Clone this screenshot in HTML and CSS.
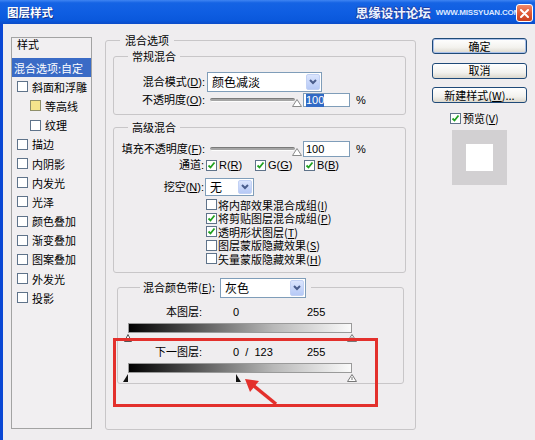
FILE: index.html
```html
<!DOCTYPE html>
<html lang="zh-CN">
<head>
  <meta charset="UTF-8">
  <title>图层样式</title>
  <link rel="stylesheet" href="styles.css">
</head>
<body>
<div class="window">

  <div class="titlebar">
    <span class="title">图层样式</span>
    <span class="watermark">
      <span class="wm-cn">思缘设计论坛</span>
      <span class="wm-en">WWW.MISSYUAN.COM</span>
    </span>
    <span class="close">
      <svg width="9" height="9" viewBox="0 0 9 9"><path d="M1 1 L8 8 M8 1 L1 8" stroke="#fff" stroke-width="2" stroke-linecap="round"/></svg>
    </span>
  </div>

  <div class="frame">

    <!-- 左侧样式列表 -->
    <div class="style-list">
      <div class="item head">样式</div>
      <div class="item selected">混合选项:自定</div>
      <div class="item"><span class="cb"></span>斜面和浮雕</div>
      <div class="item sub"><span class="cb hot"></span>等高线</div>
      <div class="item sub"><span class="cb"></span>纹理</div>
      <div class="item"><span class="cb"></span>描边</div>
      <div class="item"><span class="cb"></span>内阴影</div>
      <div class="item"><span class="cb"></span>内发光</div>
      <div class="item"><span class="cb"></span>光泽</div>
      <div class="item"><span class="cb"></span>颜色叠加</div>
      <div class="item"><span class="cb"></span>渐变叠加</div>
      <div class="item"><span class="cb"></span>图案叠加</div>
      <div class="item"><span class="cb"></span>外发光</div>
      <div class="item"><span class="cb"></span>投影</div>
    </div>

    <!-- 混合选项 -->
    <fieldset class="group main">
      <legend>混合选项</legend>

      <fieldset class="group section general">
        <legend>常规混合</legend>
        <div class="row r-mode">
          <span class="lbl">混合模式(<u>D</u>):</span>
          <div class="combo w-mode">
            <span class="val">颜色减淡</span>
            <span class="drop"><svg width="8" height="6" viewBox="0 0 8 6"><path d="M1 1 L4 4 L7 1" fill="none" stroke="#4a5d8c" stroke-width="2"/></svg></span>
          </div>
        </div>
        <div class="row r-opacity">
          <span class="lbl">不透明度(<u>O</u>):</span>
          <div class="slider">
            <span class="track"></span>
            <svg class="thumb" width="10" height="8" viewBox="0 0 10 8"><path d="M5 0.5 L9.5 7.5 L0.5 7.5 Z" fill="#fff" stroke="#8a8a8a"/></svg>
          </div>
          <div class="num"><span class="sel">100</span></div>
          <span class="pct">%</span>
        </div>
      </fieldset>

      <fieldset class="group section advanced">
        <legend>高级混合</legend>
        <div class="row r-fill">
          <span class="lbl">填充不透明度(<u>F</u>):</span>
          <div class="slider">
            <span class="track"></span>
            <svg class="thumb" width="10" height="8" viewBox="0 0 10 8"><path d="M5 0.5 L9.5 7.5 L0.5 7.5 Z" fill="#fff" stroke="#8a8a8a"/></svg>
          </div>
          <div class="num tall">100</div>
          <span class="pct">%</span>
        </div>
        <div class="row r-channel">
          <span class="lbl">通道:</span>
          <span class="chk-inline"><span class="cb on"><svg width="9" height="9" viewBox="0 0 9 9"><path d="M1.5 4.5 L3.5 6.5 L7.5 1.5" fill="none" stroke="#21a121" stroke-width="1.8"/></svg></span>R(<u>R</u>)</span>
          <span class="chk-inline"><span class="cb on"><svg width="9" height="9" viewBox="0 0 9 9"><path d="M1.5 4.5 L3.5 6.5 L7.5 1.5" fill="none" stroke="#21a121" stroke-width="1.8"/></svg></span>G(<u>G</u>)</span>
          <span class="chk-inline"><span class="cb on"><svg width="9" height="9" viewBox="0 0 9 9"><path d="M1.5 4.5 L3.5 6.5 L7.5 1.5" fill="none" stroke="#21a121" stroke-width="1.8"/></svg></span>B(<u>B</u>)</span>
        </div>
        <div class="row r-knock">
          <span class="lbl">挖空(<u>N</u>):</span>
          <div class="combo w-knock">
            <span class="val">无</span>
            <span class="drop"><svg width="8" height="6" viewBox="0 0 8 6"><path d="M1 1 L4 4 L7 1" fill="none" stroke="#4a5d8c" stroke-width="2"/></svg></span>
          </div>
        </div>
        <div class="checklist">
          <div class="chk"><span class="cb"></span>将内部效果混合成组(<u>I</u>)</div>
          <div class="chk"><span class="cb on"><svg width="9" height="9" viewBox="0 0 9 9"><path d="M1.5 4.5 L3.5 6.5 L7.5 1.5" fill="none" stroke="#21a121" stroke-width="1.8"/></svg></span>将剪贴图层混合成组(<u>P</u>)</div>
          <div class="chk"><span class="cb on"><svg width="9" height="9" viewBox="0 0 9 9"><path d="M1.5 4.5 L3.5 6.5 L7.5 1.5" fill="none" stroke="#21a121" stroke-width="1.8"/></svg></span>透明形状图层(<u>T</u>)</div>
          <div class="chk"><span class="cb"></span>图层蒙版隐藏效果(<u>S</u>)</div>
          <div class="chk"><span class="cb"></span>矢量蒙版隐藏效果(<u>H</u>)</div>
        </div>
      </fieldset>

      <fieldset class="group blend">
        <legend>
          <div class="legend-row">
            <span>混合颜色带(<u>E</u>):</span>
            <div class="combo w-band">
              <span class="val">灰色</span>
              <span class="drop"><svg width="8" height="6" viewBox="0 0 8 6"><path d="M1 1 L4 4 L7 1" fill="none" stroke="#4a5d8c" stroke-width="2"/></svg></span>
            </div>
          </div>
        </legend>

        <div class="band-row first">
          <span class="lbl">本图层:</span>
          <span class="v-lo">0</span>
          <span>255</span>
        </div>
        <div class="bar"></div>
        <div class="thumbs">
          <svg class="t-left" width="8" height="8" viewBox="0 0 8 8"><path d="M4 0.5 L7.5 7.5 L0.5 7.5 Z" fill="#fff" stroke="#555"/></svg>
          <svg class="t-right" width="10" height="8" viewBox="0 0 10 8"><path d="M5 0.5 L9.5 7.5 L0.5 7.5 Z" fill="#fff" stroke="#777"/><path d="M5 3 V6" stroke="#777"/></svg>
        </div>

        <div class="band-row">
          <span class="lbl">下一图层:</span>
          <span class="v-lo">0 &nbsp;/ &nbsp;123</span>
          <span>255</span>
        </div>
        <div class="bar"></div>
        <div class="thumbs">
          <svg class="t-half-l" width="5" height="8" viewBox="0 0 5 8"><path d="M5 0 V8 H0 Z" fill="#111"/></svg>
          <svg class="t-half-r" style="left: 48.2%" width="5" height="8" viewBox="0 0 5 8"><path d="M0 0 V8 H5 Z" fill="#111"/></svg>
          <svg class="t-right" width="10" height="8" viewBox="0 0 10 8"><path d="M5 0.5 L9.5 7.5 L0.5 7.5 Z" fill="#fff" stroke="#777"/><path d="M5 3 V6" stroke="#777"/></svg>
        </div>
      </fieldset>
    </fieldset>

    <!-- 右侧按钮 -->
    <div class="side">
      <div class="btn default">确定</div>
      <div class="btn">取消</div>
      <div class="btn">新建样式(<u>W</u>)...</div>
      <div class="preview-chk"><span class="cb on"><svg width="9" height="9" viewBox="0 0 9 9"><path d="M1.5 4.5 L3.5 6.5 L7.5 1.5" fill="none" stroke="#21a121" stroke-width="1.8"/></svg></span>预览(<u>V</u>)</div>
      <div class="preview"><span class="swatch"></span></div>
    </div>
  </div>

  <!-- 红框和箭头标注 -->
  <svg class="annot" width="535" height="440" viewBox="0 0 535 440">
    <rect x="114.5" y="339.5" width="262" height="66" fill="none" stroke="#e3302c" stroke-width="3"/>
    <line x1="276" y1="404" x2="254" y2="386" stroke="#e3302c" stroke-width="3.5"/>
    <path d="M245 379 L259 381 L250 392 Z" fill="#e3302c"/>
  </svg>
</div>
</body>
</html>
```

FILE: styles.css
```css
body {
  margin: 0;
  background: #efedef;
  font-family: "Liberation Sans", "Noto Sans CJK SC", sans-serif;
  font-size: 11px;
  color: #000;
}
u {
  text-decoration: underline;
}
.window {
  width: 535px;
  height: 440px;
  overflow: hidden;
  position: relative;
}

/* 标题栏 */
.titlebar {
  height: 24px;
  display: flex;
  align-items: center;
  background: linear-gradient(#3f84f2 0%, #1563e4 12%, #0f5ee2 50%, #0a58dc 85%, #0b4bc8 100%);
}
.title {
  margin-left: 7px;
  color: #fff;
  font-family: "Noto Sans CJK SC", sans-serif;
  font-weight: bold;
  font-size: 11.5px;
  text-shadow: 1px 1px 0 #0b2f8c;
}
.watermark {
  margin-left: auto;
  margin-right: 15px;
  display: flex;
  align-items: center;
  gap: 5px;
}
.wm-cn {
  font-family: "Noto Sans CJK SC", sans-serif;
  font-weight: bold;
  font-size: 12.5px;
  color: #eef4ff;
  text-shadow: 1px 0 0 #1d3fa8, -1px 0 0 #1d3fa8, 0 1px 0 #1d3fa8, 0 -1px 0 #1d3fa8;
}
.wm-en {
  font-family: "Liberation Sans", sans-serif;
  font-weight: bold;
  font-size: 8px;
  color: #dbe7ff;
  letter-spacing: -0.2px;
}
.close {
  position: absolute;
  top: 4px;
  right: 2px;
  width: 17px;
  height: 18px;
  box-sizing: border-box;
  border: 1px solid #fff;
  border-radius: 3px;
  background: linear-gradient(#f08a6a, #e05a36 50%, #c8401f);
  display: flex;
  align-items: center;
  justify-content: center;
}

/* 主体 */
.frame {
  display: flex;
  align-items: flex-start;
  height: 416px;
  box-sizing: border-box;
  border-left: 3px solid #0a47d4;
  padding-left: 8px;
}

/* 左侧列表 */
.style-list {
  margin-top: 13px;
  width: 81px;
  height: 392px;
  box-sizing: border-box;
  border: 1px solid #a3a3a3;
  background: #f1eff1;
}
.item {
  height: 19.2px;
  display: flex;
  align-items: center;
  padding-left: 5px;
  white-space: nowrap;
  font-family: "Noto Sans CJK SC", sans-serif;
}
.item.head {
  height: 20px;
  align-items: flex-start;
  line-height: 12px;
}
.item.selected {
  background: #3a6bc6;
  color: #fff;
  padding-left: 2px;
}
.item.sub {
  padding-left: 18px;
}
.cb {
  width: 11px;
  height: 11px;
  box-sizing: border-box;
  border: 1px solid #5f738a;
  background: #fff;
  margin-right: 4px;
  flex: none;
  display: flex;
  align-items: center;
  justify-content: center;
}
.cb.hot {
  background: #f4e48c;
  border-color: #8f8f6a;
}

/* 分组框 */
.group {
  margin: 0;
  padding: 0;
  border: 1px solid #c8c6c8;
  border-radius: 3px;
  min-width: 0;
}
.group > legend {
  padding: 0 4px;
  line-height: 14px;
  font-family: "Noto Sans CJK SC", sans-serif;
}
.main {
  margin: 9px 0 0 13px;
  width: 311px;
  height: 397px;
  box-sizing: border-box;
}
.main > legend {
  margin-left: 14px;
  padding: 0 5px;
}
.section {
  margin: 2px 9px 0 7px;
}
.section > legend {
  margin-left: 14px;
}
.advanced {
  margin-top: 5px;
}

.row {
  display: flex;
  align-items: center;
  white-space: nowrap;
  line-height: 13px;
}
.lbl {
  width: 91px;
  text-align: right;
  flex: none;
}

.combo {
  display: flex;
  align-items: center;
  height: 20px;
  box-sizing: border-box;
  border: 1px solid #7f9db9;
  background: #fff;
  margin-left: 2px;
}
.combo .val {
  flex: 1;
  padding-left: 4px;
  font-family: "Noto Sans CJK SC", sans-serif;
  font-size: 12px;
  line-height: 14px;
}
.combo .drop {
  width: 14px;
  height: 16px;
  margin-right: 1px;
  box-sizing: border-box;
  border: 1px solid #c2d1f4;
  border-radius: 2px;
  background: linear-gradient(#dbe5fd, #b6c9f6);
  display: flex;
  align-items: center;
  justify-content: center;
}
.w-mode {
  width: 115px;
}
.w-knock {
  width: 49px;
  height: 18px;
  margin-left: 1px;
}
.w-knock .drop {
  height: 14px;
}
.w-band {
  width: 86px;
  margin-left: 5px;
}

.r-mode {
  margin-top: 9px;
  height: 20px;
}
.r-opacity {
  height: 16px;
  padding-bottom: 6px;
}
.slider {
  display: flex;
  align-items: center;
  margin-left: 5px;
  width: 93px;
}
.track {
  width: 85px;
  height: 2px;
  background: #a5a5a5;
  border-top: 1px solid #7a7a7a;
  border-bottom: 1px solid #fdfdfd;
  border-radius: 2px;
}
.thumb {
  margin-left: -3px;
  margin-top: 5px;
}
.num {
  width: 47px;
  height: 14px;
  box-sizing: border-box;
  border: 1px solid #7f9db9;
  background: #fff;
  display: flex;
  align-items: center;
  padding-left: 2px;
}
.num.tall {
  height: 16px;
}
.num .sel {
  background: #316ac5;
  color: #fff;
}
.pct {
  margin-left: 6px;
}

.r-fill {
  margin-top: 7px;
  height: 16px;
}
.r-channel {
  height: 16px;
}
.r-channel .lbl {
  width: 90px;
}
.chk-inline {
  display: flex;
  align-items: center;
  width: 47px;
  margin-left: 2px;
}
.chk-inline .cb {
  margin-right: 2px;
}
.r-knock {
  margin-top: 5px;
  height: 18px;
}
.r-knock .lbl {
  width: 90px;
}
.checklist {
  margin: 2px 0 0 92px;
  padding-bottom: 6px;
}
.chk {
  height: 13.5px;
  line-height: 12px;
  display: flex;
  align-items: center;
  white-space: nowrap;
  font-family: "Noto Sans CJK SC", sans-serif;
}
.chk .cb {
  margin-right: 1px;
}

/* 混合颜色带 */
.blend {
  margin: 5px 11px 0 11px;
  padding-bottom: 1px;
}
.blend > legend {
  margin-left: 22px;
  padding: 0 5px 0 3px;
}
.legend-row {
  display: flex;
  align-items: center;
  height: 20px;
  line-height: 13px;
}
.band-row {
  display: flex;
  align-items: center;
  height: 14px;
  line-height: 13px;
  margin-top: 4px;
  white-space: nowrap;
}
.band-row.first {
  margin-top: 8px;
}
.band-row .lbl {
  width: 84px;
}
.v-lo {
  margin-left: 31px;
  width: 74px;
}
.bar {
  margin: 3px 0 0 10px;
  width: 224px;
  height: 10px;
  box-sizing: border-box;
  border: 1px solid #9a9a9a;
  background: linear-gradient(90deg, #000 0%, #555 30%, #b8b8b8 65%, #fafafa 100%);
}
.thumbs {
  position: relative;
  margin: 1px 0 0 10px;
  width: 224px;
  height: 8px;
}
.thumbs svg {
  position: absolute;
  top: 0;
}
.t-left {
  left: -4px;
}
.t-right {
  right: -5px;
}
.t-half-l {
  left: -5px;
}

/* 右侧 */
.side {
  margin: 14px 0 0 16px;
  width: 95px;
  display: flex;
  flex-direction: column;
}
.btn {
  height: 16px;
  line-height: 13px;
  box-sizing: border-box;
  border: 1px solid #1f4a78;
  border-radius: 3px;
  background: linear-gradient(#ffffff, #f3f2ee 60%, #dcd8cd);
  display: flex;
  align-items: center;
  justify-content: center;
  margin-bottom: 8.5px;
  font-family: "Noto Sans CJK SC", sans-serif;
  white-space: nowrap;
}
.btn.default {
  box-shadow: inset 0 0 0 1px #a9c0ea;
}
.preview-chk {
  display: flex;
  align-items: center;
  height: 14px;
  line-height: 13px;
  margin: 0 0 0 18px;
  font-family: "Noto Sans CJK SC", sans-serif;
}
.preview-chk .cb {
  margin-right: 2px;
}
.preview {
  margin: 4px 0 0 20px;
  width: 55px;
  height: 55px;
  background: #d2d0d2;
  display: flex;
  align-items: center;
  justify-content: center;
}
.swatch {
  width: 27px;
  height: 27px;
  background: #fff;
}

/* 标注 */
.annot {
  position: absolute;
  left: 0;
  top: 0;
  pointer-events: none;
}
```
